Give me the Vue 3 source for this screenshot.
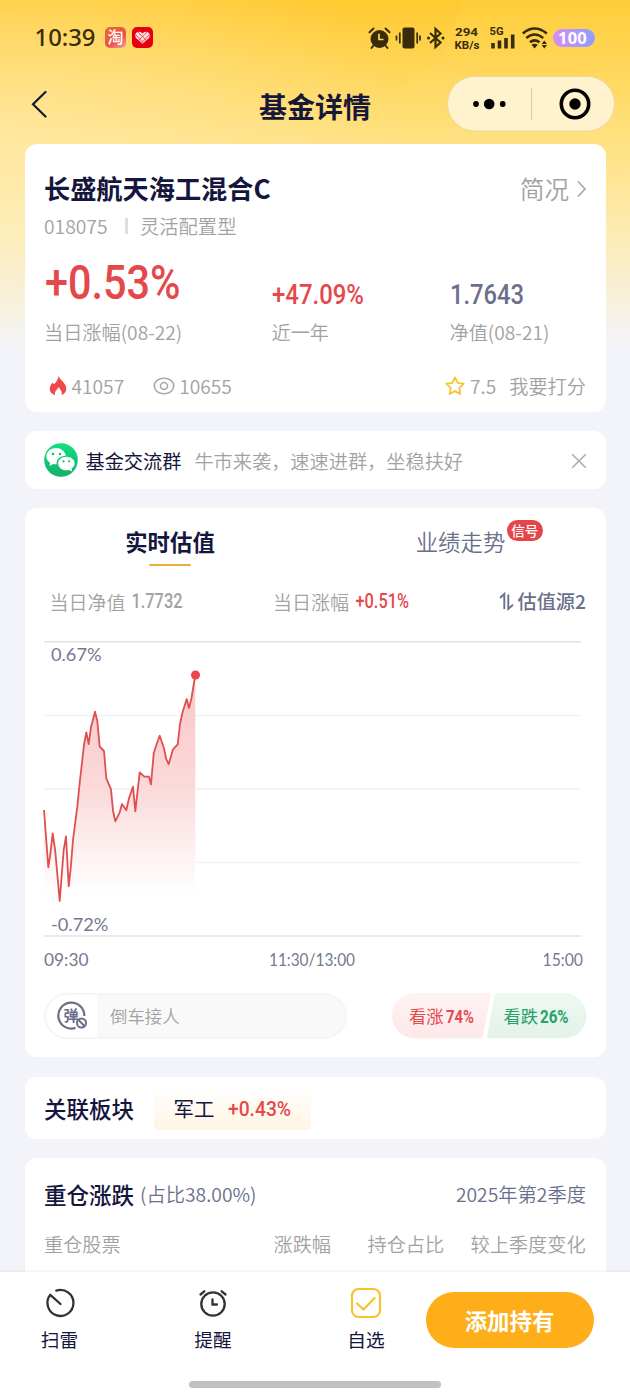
<script setup>
const points = [
  [0, 175], [4.3, 232.3], [6, 221.7], [8.7, 198.3], [11.3, 216.7], [15.7, 266], [19.7, 215], [22, 201.3],
  [24.7, 251.3], [26.7, 233.3], [29, 205], [33.3, 171.7], [36, 145], [40, 110], [42.3, 97.3], [44.7, 109],
  [47, 92.3], [51, 76.7], [53.3, 86], [55.7, 111.7], [60, 116], [62.3, 143.3], [67, 154.3], [69, 175.7],
  [71.3, 186.3], [75.7, 177.3], [78, 169], [82.3, 175.3], [85, 163.3], [89, 151.7], [91.3, 176.3],
  [95.7, 137.3], [100.3, 141.7], [105, 141.7], [107, 149.3], [109.7, 118.3], [112.7, 109], [115.7, 100.7],
  [120, 113.3], [122, 123.3], [124.7, 129.3], [129, 114.3], [133.7, 109.3], [136, 89], [138.7, 76.7],
  [142.7, 64], [145, 73], [147.3, 64], [151.3, 40],
]
const line = 'M' + points.map((p) => p.join(' ')).join('L')
const area = line + 'V260H0Z'
</script>

<template>
  <div class="page">
    <svg class="sky" width="630" height="400" aria-hidden="true">
      <defs>
        <linearGradient id="skyBase" x1="0" y1="0" x2="0" y2="1">
          <stop offset="0" stop-color="#ffca31" />
          <stop offset=".15" stop-color="#ffd453" />
          <stop offset=".35" stop-color="#ffe182" />
          <stop offset=".55" stop-color="#fdeaab" />
          <stop offset=".87" stop-color="#f3f4fa" />
        </linearGradient>
        <radialGradient id="skyLeft" gradientUnits="userSpaceOnUse" cx="0" cy="0" r="1" gradientTransform="translate(0 130) scale(400 220)">
          <stop offset="0" stop-color="#fff3d0" stop-opacity=".38" />
          <stop offset=".5" stop-color="#fff3d0" stop-opacity=".22" />
          <stop offset="1" stop-color="#fff3d0" stop-opacity="0" />
        </radialGradient>
        <linearGradient id="skyArc" x1="0" y1="0" x2="0" y2="1">
          <stop offset="0" stop-color="#ffe577" stop-opacity=".13" />
          <stop offset="1" stop-color="#ffe577" stop-opacity="0" />
        </linearGradient>
      </defs>
      <rect width="630" height="400" fill="url(#skyBase)" />
      <rect width="630" height="400" fill="url(#skyLeft)" />
      <path d="M464 0Q452 30 442 60Q385 88 352 144H630V0Z" fill="url(#skyArc)" />
    </svg>

    <header class="status">
      <svg class="clock" width="62" height="24"><text x="-.5" y="21" textLength="61" lengthAdjust="spacingAndGlyphs">10:39</text></svg>
      <span class="app tao">淘</span>
      <svg class="app-svg" width="21" height="21" viewBox="0 0 21 21">
        <rect width="21" height="21" rx="5" fill="#e60012" />
        <path d="M10.500 16.700L4 11Q2.300 8.300 4.300 5.800Q7 3.600 10.500 6.200Q14 3.600 16.700 5.800Q18.700 8.300 17 11Z" fill="#ffd8da" />
        <path d="M6 5l8.500 8.500M15 5l-8.500 8.500M4 8l7 7.500M17 8l-7 7.500" stroke="#e60012" stroke-width=".6" />
      </svg>
      <div class="sys">
        <svg width="23" height="22" viewBox="0 0 23 22">
          <circle cx="11.500" cy="12" r="9" fill="#3a2c0a" />
          <path d="M1.500 5.200L5.500 1.500M21.500 5.200L17.500 1.500M5.500 18.500L3.500 21M17.500 18.500L19.500 21" stroke="#3a2c0a" stroke-width="2" stroke-linecap="round" />
          <path d="M11 6.800V12.500H15.500" fill="none" stroke="#ffd455" stroke-width="1.700" />
        </svg>
        <svg width="26" height="22" viewBox="0 0 26 22">
          <rect x="7.500" y=".5" width="12" height="21" rx="2" fill="#3a2c0a" />
          <path d="M4.800 5.500V16.500M1.500 8.500V13.500M22.200 5.500V16.500M25 8.500V13.500" stroke="#3a2c0a" stroke-width="1.700" />
        </svg>
        <svg width="19" height="22" viewBox="0 0 19 22">
          <path d="M4 6L14.500 15.500L9.500 20V2L14.500 6.500L4 16" fill="none" stroke="#3a2c0a" stroke-width="2.200" />
          <circle cx="2.500" cy="11" r="1.500" fill="#3a2c0a" /><circle cx="17" cy="11" r="1.500" fill="#3a2c0a" />
        </svg>
        <svg class="tiny" width="27" height="24"><text x="0" y="9.600" textLength="23" lengthAdjust="spacingAndGlyphs">294</text><text x="-.5" y="22.600" textLength="25" lengthAdjust="spacingAndGlyphs">KB/s</text></svg>
        <svg class="tiny sig" width="26" height="24" viewBox="0 0 26 24">
          <text x="-.5" y="9" textLength="14" lengthAdjust="spacingAndGlyphs">5G</text>
          <path d="M3 17V22.500M9.500 14.500V22.500M16 12V22.500M22.700 8.500V22.500" stroke="#3a2c0a" stroke-width="3.600" stroke-linecap="butt" />
        </svg>
        <svg width="26" height="22" viewBox="0 0 26 22">
          <path d="M.8 6.500Q12.500 -3.500 24.800 6.500M4.300 11Q12.500 4 21.200 11M8 15.200Q12.500 11.500 17.500 15.200" fill="none" stroke="#3a2c0a" stroke-width="2.600" />
          <path d="M9.500 17.800Q12.600 15.500 15.800 17.800L12.600 21.500ZM22.300 13.500L25 17H19.600ZM22.300 21.500L25 18H19.600Z" fill="#3a2c0a" />
        </svg>
        <span class="batt">100</span>
      </div>
    </header>

    <nav class="nav">
      <svg class="back" width="16" height="28" viewBox="0 0 16 28"><path d="M14.500 2L2 14.300L14.500 26.500" fill="none" stroke="#17172e" stroke-width="2.200" stroke-linecap="round" /></svg>
      <h1>基金详情</h1>
      <svg class="capsule" width="169" height="56" viewBox="0 0 169 56">
        <rect x=".5" y=".5" width="167" height="54.500" rx="27.200" fill="#fff3cf" stroke="#e7d49a" stroke-width=".8" />
        <path d="M84.500 12V44.500" stroke="#dccb98" stroke-width="1" />
        <circle cx="29" cy="28" r="2.900" /><circle cx="42.200" cy="28" r="5.300" /><circle cx="55.700" cy="28" r="2.900" />
        <circle cx="128" cy="28" r="13.700" fill="none" stroke="#000" stroke-width="3.600" /><circle cx="128" cy="28" r="5.700" />
      </svg>
    </nav>

    <main>
      <section class="card fund">
        <div class="row title-row">
          <h2>长盛航天海工混合C</h2>
          <span class="brief">简况<svg width="11" height="18" viewBox="0 0 11 18"><path d="M2 1.500L9 9L2 16.500" fill="none" stroke="#aaa" stroke-width="1.700" /></svg></span>
        </div>
        <div class="row code"><span>018075</span><i></i><span>灵活配置型</span></div>
        <div class="stats">
          <div>
            <svg class="din red" width="140" height="60"><text class="big" x="1" y="56" textLength="135.500" lengthAdjust="spacingAndGlyphs">+0.53%</text></svg>
            <p>当日涨幅(08-22)</p>
          </div>
          <div>
            <svg class="din red" width="100" height="60"><text class="mid" x="0" y="61" textLength="92" lengthAdjust="spacingAndGlyphs">+47.09%</text></svg>
            <p>近一年</p>
          </div>
          <div>
            <svg class="din slate" width="80" height="60"><text class="mid" x="0" y="61" textLength="74" lengthAdjust="spacingAndGlyphs">1.7643</text></svg>
            <p>净值(08-21)</p>
          </div>
        </div>
        <div class="row meta">
          <svg class="fire" width="18" height="21" viewBox="0 0 18 21"><path d="M9.500 .5C10 4 15 6.500 16.800 11C18.300 15 16 19 12.500 20C13.500 16.500 11.500 14.500 9.500 12C8.500 14.500 5 16.500 6 20C2 19 0 15.500 1 12C1.600 10 2.800 9 3.300 7.500L5 9.300C7.500 7 9.500 4 9.500 .5Z" fill="#f04848" /></svg>
          <span>41057</span>
          <svg class="eye" width="22" height="18" viewBox="0 0 22 18"><ellipse cx="11" cy="9" rx="9.800" ry="7.800" fill="none" stroke="#aaa" stroke-width="1.600" /><circle cx="11" cy="9" r="3.500" fill="none" stroke="#aaa" stroke-width="1.600" /></svg>
          <span>10655</span>
          <svg class="star" width="20" height="20" viewBox="0 0 20 20"><path d="M10 1.500L12.600 6.900L18.700 7.700L14.300 11.900L15.300 18L10 15.100L4.700 18L5.700 11.900L1.300 7.700L7.400 6.900Z" fill="none" stroke="#f6c42f" stroke-width="1.800" stroke-linejoin="round" /></svg>
          <span class="score">7.5</span><span>我要打分</span>
        </div>
      </section>

      <section class="card row group">
        <svg width="34" height="34" viewBox="0 0 34 34">
          <defs><linearGradient id="wx" x1="0" y1="0" x2="0" y2="1"><stop offset="0" stop-color="#10e080" /><stop offset="1" stop-color="#12b267" /></linearGradient></defs>
          <circle cx="17" cy="17" r="16.800" fill="url(#wx)" />
          <path d="M12 5C6.500 5 2.300 8.700 2.300 13.200C2.300 15.900 3.800 18.200 6.100 19.700L5.400 23L9.300 21C10.300 21.200 11.300 21.300 12.700 21.200C12 16.500 16 12.600 21.800 12.700C21 8.300 17 5 12 5Z" fill="#fff" />
          <path d="M22.300 13.800C17.800 13.800 14.200 16.700 14.200 20.500C14.200 24.300 17.800 27.300 22.300 27.300C23.300 27.300 24.200 27.100 25.100 26.900L28.300 28.500L27.600 25.600C29.500 24.400 30.700 22.500 30.700 20.500C30.700 16.700 27 13.800 22.300 13.800Z" fill="#fff" />
          <g fill="#13c46e"><circle cx="9" cy="11" r="1.300" /><circle cx="16" cy="11" r="1.300" /><circle cx="19.500" cy="18.300" r="1.100" /><circle cx="25" cy="18.300" r="1.100" /></g>
        </svg>
        <b>基金交流群</b><span>牛市来袭，速速进群，坐稳扶好</span>
        <svg class="close" width="16" height="16" viewBox="0 0 16 16"><path d="M1.200 1.200L14.800 14.800M14.800 1.200L1.200 14.800" stroke="#aaa" stroke-width="1.500" /></svg>
      </section>

      <section class="card value">
        <div class="tabs">
          <div class="tab on">实时估值</div>
          <div class="tab"><span>业绩走势<em>信号</em></span></div>
        </div>
        <div class="row quote">
          <span class="q1">当日净值</span>
          <svg class="din gray" width="54" height="20"><text class="sm" x=".5" y="17" textLength="51" lengthAdjust="spacingAndGlyphs">1.7732</text></svg>
          <span class="q2">当日涨幅</span>
          <svg class="din red" width="56" height="20"><text class="sm" x="1.500" y="17" textLength="53.500" lengthAdjust="spacingAndGlyphs">+0.51%</text></svg>
          <span class="source"><svg width="15" height="19" viewBox="0 0 15 19"><path d="M1 6L5.300 2V17M9.300 2.500V17L14 12.800" fill="none" stroke="#6a6f8c" stroke-width="1.900" /></svg>估值源2</span>
        </div>
        <svg class="chart" width="542" height="340" viewBox="0 0 542 340">
          <defs><linearGradient id="fade" gradientUnits="userSpaceOnUse" x1="0" y1="40" x2="0" y2="260"><stop offset="0" stop-color="#fac5c8" /><stop offset=".5" stop-color="#fbd9da" /><stop offset="1" stop-color="#fff" /></linearGradient></defs>
          <path d="M0 80.500H537M0 154H537M0 227.500H537" stroke="#f0f2f2" stroke-width="1.500" />
          <path d="M0 6.800H537M0 301H537" stroke="#dfe3e4" stroke-width="1.500" />
          <path :d="area" fill="url(#fade)" />
          <path :d="line" fill="none" stroke="#e14e4e" stroke-width="1.800" stroke-linejoin="round" />
          <circle cx="151.500" cy="40" r="4.500" fill="#ec4449" />
          <g class="axis">
            <text x="7" y="26" textLength="50.500" lengthAdjust="spacingAndGlyphs">0.67%</text>
            <text x="7" y="295.500" textLength="57.500" lengthAdjust="spacingAndGlyphs">-0.72%</text>
            <text x="0" y="330.500" textLength="44.500" lengthAdjust="spacingAndGlyphs">09:30</text>
            <text x="225" y="330.500" textLength="86" lengthAdjust="spacingAndGlyphs">11:30/13:00</text>
            <text x="498.500" y="330.500" textLength="40.500" lengthAdjust="spacingAndGlyphs">15:00</text>
          </g>
        </svg>
        <div class="row vote">
          <div class="barrage">
            <div class="toggle">
              <svg width="32" height="30" viewBox="0 0 32 30">
                <path d="M28.300 15A13 13 0 1 0 19.500 26.900" fill="none" stroke="#6a6f8c" stroke-width="2.200" />
                <text x="7.500" y="19.500">弹</text>
                <circle cx="25.500" cy="22" r="4.500" fill="#fff" stroke="#6a6f8c" stroke-width="2" /><path d="M22.500 19L28.500 25" stroke="#6a6f8c" stroke-width="2" />
              </svg>
            </div>
            <span>倒车接人</span>
          </div>
          <svg class="votes" width="194" height="46" viewBox="0 0 194 46">
            <defs>
              <linearGradient id="up" x1="0" y1="0" x2="0" y2="1"><stop offset="0" stop-color="#fef3f4" /><stop offset="1" stop-color="#fde8e9" /></linearGradient>
              <linearGradient id="down" x1="0" y1="0" x2="0" y2="1"><stop offset="0" stop-color="#eff8f2" /><stop offset="1" stop-color="#e3f2e6" /></linearGradient>
            </defs>
            <path d="M22.500 0H97Q99.200 0 98.700 2.500L91 43Q90.500 45.300 88 45.300H22.500A22.600 22.600 0 0 1 22.500 0Z" fill="url(#up)" />
            <path d="M106 0H172A22.600 22.600 0 0 1 172 45.300H97Q94.700 45.300 95.200 43L102.500 3Q103 0 106 0Z" fill="url(#down)" />
            <g fill="#e34b4e"><text class="cn" x="17" y="29.500">看涨</text><text class="dn" x="54" y="29.500" textLength="28" lengthAdjust="spacingAndGlyphs">74%</text></g>
            <g fill="#23a268"><text class="cn" x="111.500" y="29.500">看跌</text><text class="dn" x="148" y="29.500" textLength="28.500" lengthAdjust="spacingAndGlyphs">26%</text></g>
          </svg>
        </div>
      </section>

      <section class="card row sector">
        <h3>关联板块</h3>
        <div class="chip"><span>军工</span><svg class="din red" width="66" height="24"><text class="chipnum" x="1" y="20" textLength="63" lengthAdjust="spacingAndGlyphs">+0.43%</text></svg></div>
      </section>

      <section class="card holdings">
        <div class="row hold-head"><h3>重仓涨跌</h3><span>(占比38.00%)</span><span class="quarter">2025年第2季度</span></div>
        <div class="cols"><span>重仓股票</span><span>涨跌幅</span><span>持仓占比</span><span>较上季度变化</span></div>
      </section>
    </main>

    <footer class="dock">
      <div class="act a1">
        <svg width="32" height="32" viewBox="0 0 32 32"><path d="M12.300 3.600A13 13 0 1 1 6.300 7.800L16.500 17" fill="none" stroke="#333" stroke-width="2.300" stroke-linecap="round" stroke-linejoin="round" /></svg>扫雷
      </div>
      <div class="act a2">
        <svg width="32" height="32" viewBox="0 0 32 32"><circle cx="16" cy="17" r="11.700" fill="none" stroke="#333" stroke-width="2.300" /><path d="M3.500 7.500L7.300 4.300M28.500 7.500L24.700 4.300M15.500 12.500V17.500H20" fill="none" stroke="#333" stroke-width="2.300" stroke-linecap="round" /></svg>提醒
      </div>
      <div class="act a3">
        <svg width="32" height="32" viewBox="0 0 32 32"><rect x="2" y="2" width="28" height="28" rx="6.500" fill="none" stroke="#f5c231" stroke-width="2.200" /><path d="M7 16.500L13.500 22.500L24.500 11" fill="none" stroke="#f5c231" stroke-width="2.200" stroke-linecap="round" /></svg>自选
      </div>
      <button>添加持有</button>
      <div class="home"></div>
    </footer>
  </div>
</template>

<style>
body { margin: 0; }
</style>

<style scoped>
.page { position: relative; width: 630px; height: 1400px; overflow: hidden; background: #f3f4fa; font-family: "Noto Sans CJK SC", sans-serif; font-weight: 350; color: #a2a2a2; font-size: 19.2px; }
svg { display: block; flex: none; overflow: visible; }
h1, h2, h3, p { margin: 0; }
span { white-space: nowrap; }
.row { display: flex; align-items: center; }
.sky { position: absolute; left: 0; top: 0; }
.status { position: relative; display: flex; height: 75px; box-sizing: border-box; padding: 25px 35px 0; align-items: flex-start; }
.clock { font: 500 24px "Noto Sans", sans-serif; fill: #3a2c0a; }
.app { width: 21px; height: 21px; margin: 2px 6px 0 8px; border-radius: 5px; background: linear-gradient(145deg, #ed6a27, #e9514c 60%, #f4aaa0); color: #fff; font-size: 16px; line-height: 18px; font-weight: 500; text-align: center; }
.app-svg { margin-top: 2px; }
.sys { display: flex; align-items: center; margin: .5px 0 0 auto; height: 24px; }
.sys > svg:nth-child(2) { margin-left: 4px; }
.sys > svg:nth-child(3) { margin-left: 5px; }
.sys > svg:nth-child(4) { margin-left: 10px; }
.sys > svg:nth-child(5) { margin-left: 8px; }
.sys > svg:nth-child(6) { margin-left: 6px; }
.tiny { font: 700 11px Roboto, sans-serif; fill: #3a2c0a; }
.batt { width: 42px; height: 18px; margin-left: 5px; border-radius: 9px; background: linear-gradient(90deg, #d88bf5, #8e9dff); color: #fff; font: 700 16.500px/18px "Noto Sans", sans-serif; letter-spacing: .3px; text-indent: -3px; text-align: center; }
.nav { position: relative; display: flex; height: 68.5px; align-items: flex-start; }
.back { margin: 15px 0 0 31px; }
h1 { margin: 11px 0 0 212px; font-size: 28px; line-height: 40px; font-weight: 700; color: #17173a; }
.capsule { margin: 1px 14px 0 auto; }
main { position: relative; display: flex; flex-direction: column; gap: 19px; padding: 0 24.500px; }
.card { box-sizing: border-box; background: #fff; border-radius: 12px; flex: none; }
.fund { height: 268.5px; padding: 23px 19.500px 0; }
.title-row { height: 42px; justify-content: space-between; }
h2 { font-size: 26.2px; line-height: 42px; font-weight: 700; color: #15163d; }
.brief { display: flex; align-items: center; gap: 7px; margin: 2px -1px 0 0; font-size: 24.500px; }
.code { height: 34px; padding-top: 1px; box-sizing: border-box; font-size: 19.3px; }
.code i { width: 3px; height: 16px; margin: 0 12px 0 17.500px; background: #dedede; }
.stats { display: grid; grid-template-columns: 227.500px 178px 1fr; height: 104px; }
.stats p { line-height: 28px; margin-top: 15px; }
.stats svg { height: 60px; }
.din { font-family: Roboto, sans-serif; font-weight: 500; }
.red { fill: #e5484b; }
.slate { fill: #6a6f8c; }
.gray { fill: #a2a2a2; }
.big { font-size: 49px; }
.mid { font-size: 28px; }
.sm { font-size: 19.500px; }
.meta { height: 30px; margin-top: 24px; }
.fire { margin: 0 5px 0 4.5px; }
.eye { margin: 0 4px 0 29px; }
.star { margin-left: auto; margin-right: 5px; }
.score { margin-right: 13px; }
.group { height: 58px; padding: 0 19px; }
.group b { margin: 0 13px 0 8px; font-weight: 400; color: #15163d; }
.group b, .group span { padding-top: 1px; }
.close { margin: 1px 0 0 auto; }
.value { height: 549px; padding: 0 19.500px; }
.tabs { display: grid; grid-template-columns: 252px 1fr; height: 76px; }
.tab { position: relative; padding-top: 16px; text-align: center; font-size: 22.400px; line-height: 34px; color: #6a6f8c; }
.tab.on { font-weight: 700; color: #15163d; }
.tab.on::after { content: ""; position: absolute; left: 104.5px; top: 56px; width: 42px; height: 2px; border-radius: 1px; background: #e9ae35; }
.tab:not(.on) { padding-left: 39px; }
.tab span { position: relative; }
em { position: absolute; left: 91px; top: -5px; width: 36px; height: 21px; border-radius: 11px; background: #e64549; color: #fff; font-style: normal; font-weight: 500; font-size: 13.500px; line-height: 20px; text-align: center; }
.quote { height: 36px; margin-top: -1px; font-size: 19px; }
.q1 { margin: 0 5px 0 5.5px; }
.q2 { margin: 0 5px 0 88.5px; }
.source { display: flex; align-items: center; gap: 4px; margin-left: auto; font-weight: 500; font-size: 19.200px; color: #6a6f8c; }
.chart { margin-top: 16px; }
.axis { font: 400 18px Lato, sans-serif; fill: #747991; }
.vote { height: 46px; margin-top: 17.500px; justify-content: space-between; }
.barrage { display: flex; align-items: center; box-sizing: border-box; width: 303px; height: 46px; border: 2px solid #f5f5f5; border-radius: 23px; background: #f9f9f9; overflow: hidden; font-size: 17.400px; }
.toggle { display: flex; align-items: center; width: 51px; height: 42px; margin-right: 13px; background: #fff; padding: 0; }
.toggle svg { margin-left: 9.5px; }
.toggle text { font-size: 15px; font-weight: 700; fill: #6a6f8c; }
.cn { font-size: 17.300px; font-weight: 400; }
.dn { font: 700 19px Roboto, sans-serif; }
.sector { height: 62px; padding: 0 19.500px; margin-top: 1px; }
h3 { font-size: 22.500px; font-weight: 500; line-height: 34px; margin-top: -1px; color: #15163d; }
.chip { display: flex; align-items: center; box-sizing: border-box; width: 157px; height: 43px; margin-left: 20px; padding-left: 19.5px; border-radius: 4px; background: linear-gradient(#fff, #fff5e3); }
.chip span { margin-right: 12px; color: #15163d; font-weight: 400; font-size: 20.500px; }
.chipnum { font-size: 20.5px; }
.holdings { height: 160px; padding: 17px 19.500px; }
.hold-head { height: 39px; color: #6a6f8c; font-size: 19.3px; }
.hold-head span { margin: -1px 0 0 6px; }
.hold-head .quarter { margin-left: auto; }
.cols { display: grid; grid-template-columns: 229.5px 94px 103px 1fr; height: 60px; line-height: 60px; }
.dock { position: absolute; left: 0; bottom: 0; box-sizing: border-box; width: 630px; height: 128px; padding-top: 15px; background: #fff; box-shadow: 0 -1px 3px #00000012; display: flex; align-items: flex-start; }
.act { display: flex; flex-direction: column; align-items: center; width: 40px; font-size: 18.700px; line-height: 30px; font-weight: 400; color: #15163d; gap: 5px; white-space: nowrap; }
.a1 { margin-left: 39.5px; }
.a2 { margin-left: 113.500px; }
.a3 { margin-left: 113px; }
button { width: 168px; height: 56px; margin: 5px 0 0 39.5px; padding: 0; border: 0; border-radius: 28px; background: #fdae18; color: #fff; font: 700 22.400px "Noto Sans CJK SC", sans-serif; }
.home { position: absolute; left: 189px; bottom: 12px; width: 252px; height: 7px; border-radius: 4px; background: #c1c1c1; }
</style>
